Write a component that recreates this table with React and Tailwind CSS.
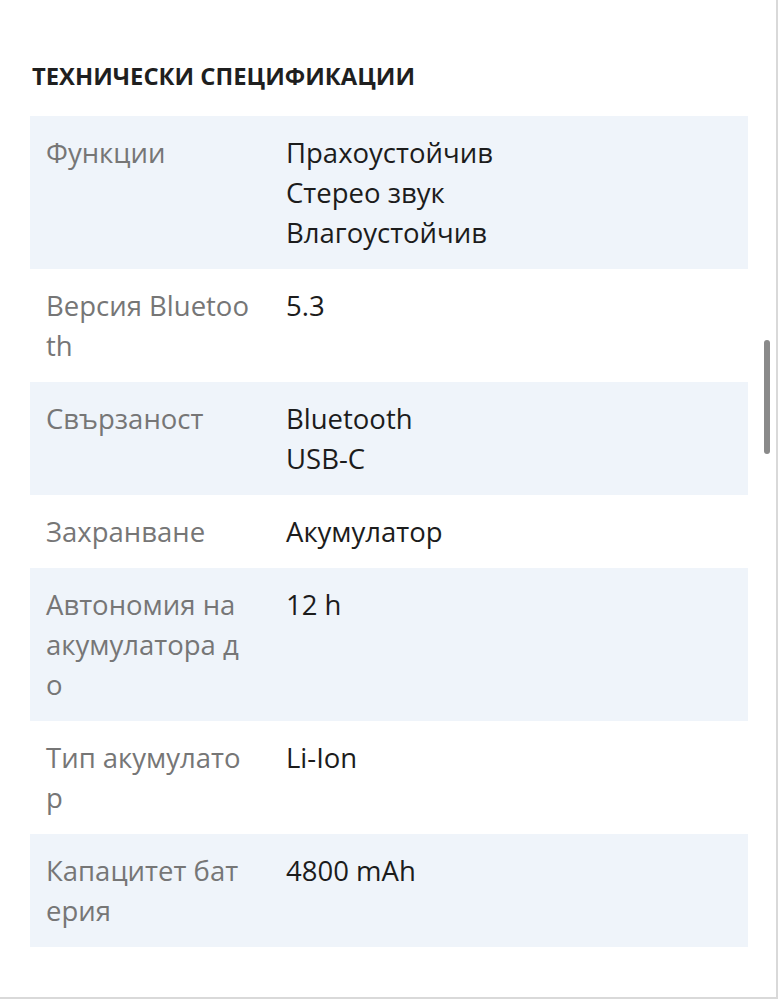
import React from 'react';

const specs = [
  { label: 'Функции', values: ['Прахоустойчив', 'Стерео звук', 'Влагоустойчив'] },
  { label: 'Версия Bluetooth', values: ['5.3'] },
  { label: 'Свързаност', values: ['Bluetooth', 'USB-C'] },
  { label: 'Захранване', values: ['Акумулатор'] },
  { label: 'Автономия на акумулатора до', values: ['12 h'] },
  { label: 'Тип акумулатор', values: ['Li-Ion'] },
  { label: 'Капацитет батерия', values: ['4800 mAh'] },
];

export default function App() {
  return (
    <div
      className="relative h-[999px] w-[778px] overflow-hidden border-r-2 border-b-2 border-[#d9d9d9] bg-white"
      style={{ fontFamily: '"Open Sans", "Noto Sans", sans-serif' }}
    >
      <div className="pl-[30px] pr-[28px] pt-[61px]">
        <h2 className="pl-[2px] text-[23.8px] font-bold uppercase leading-[30px] text-[#1f1f1f]">
          Технически спецификации
        </h2>
        <div className="mt-[25px]">
          {specs.map((row, i) => (
            <div
              key={row.label}
              className={`flex py-[16.5px] ${i % 2 === 0 ? 'bg-[#eff4fa]' : 'bg-white'}`}
            >
              <div className="w-[256px] shrink-0 break-all pl-[16px] pr-[34px] text-[27.5px] leading-[40px] text-[#767676]">
                {row.label}
              </div>
              <div className="flex flex-col text-[27.5px] leading-[40px] text-[#1c1c1c]">
                {row.values.map((v) => (
                  <span key={v}>{v}</span>
                ))}
              </div>
            </div>
          ))}
        </div>
      </div>
      <div className="absolute right-[6px] top-[340px] h-[114px] w-[6px] rounded-full bg-[#8a8a8a]" />
    </div>
  );
}
